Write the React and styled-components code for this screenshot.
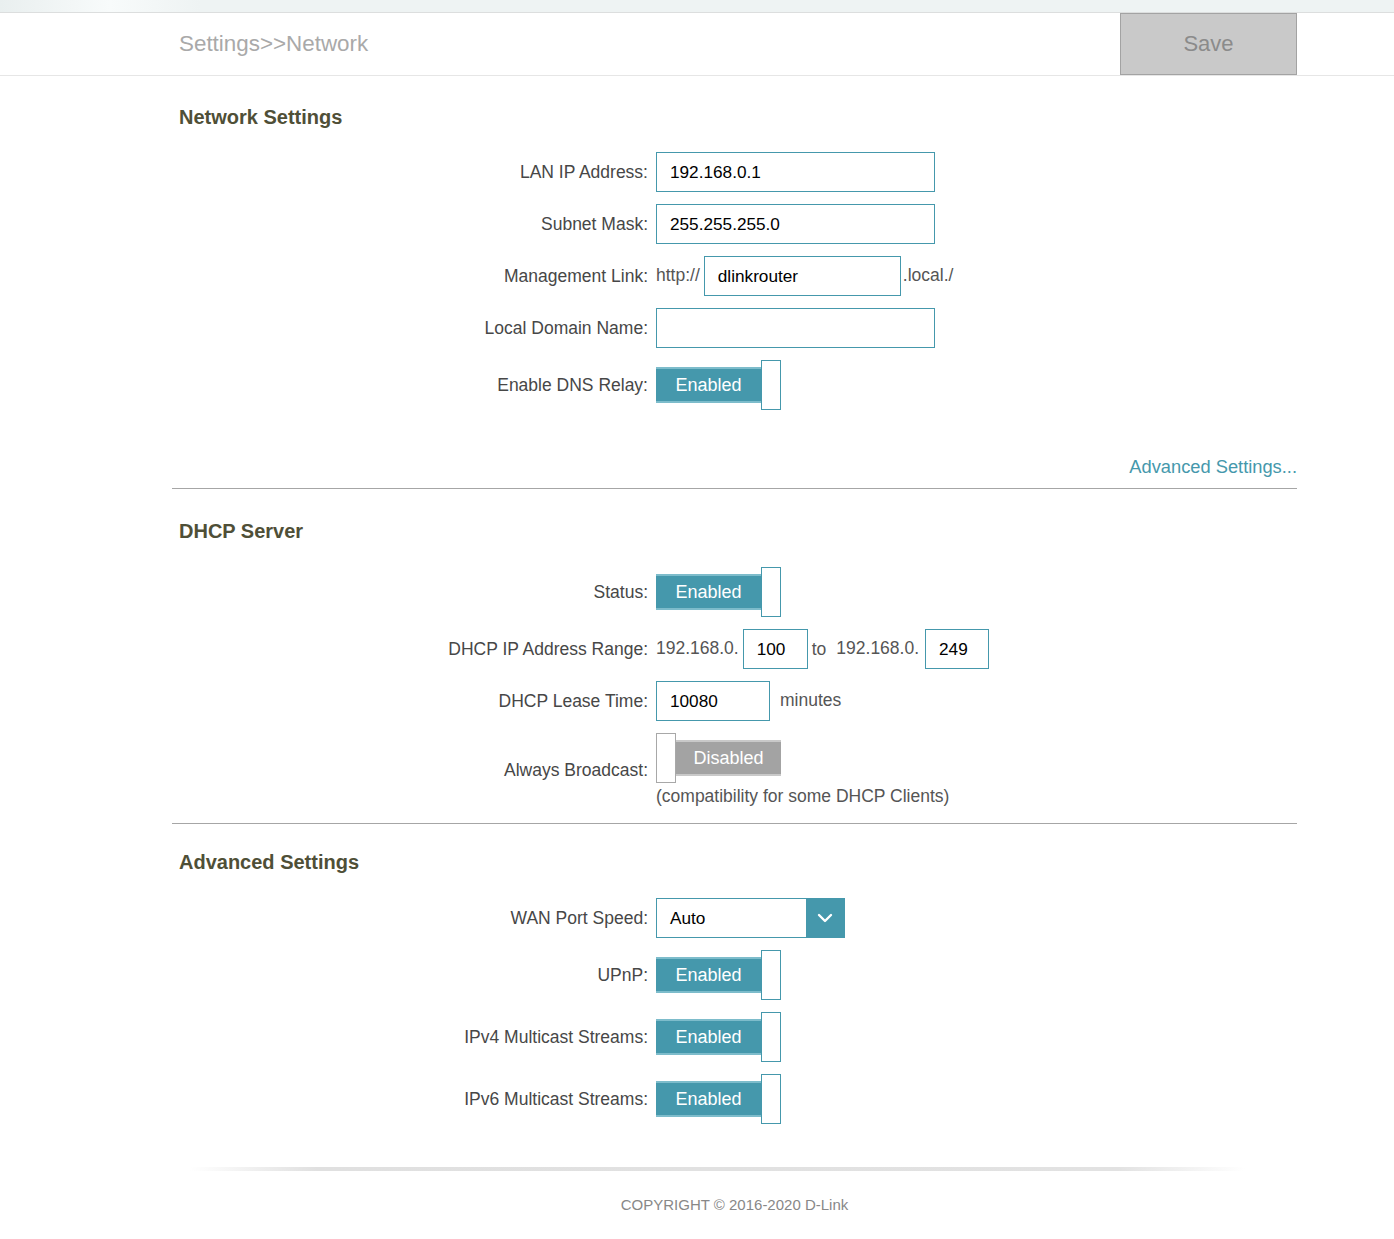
import React from "react";
import styled, { createGlobalStyle } from "styled-components";

const Global = createGlobalStyle`
  html, body { margin: 0; padding: 0; background: #fff; }
  body { font-family: "Liberation Sans", Arial, sans-serif; }
  * { box-sizing: border-box; }
`;

const TEAL = "#4598ac";

const TopBand = styled.div`
  height: 13px;
  background: linear-gradient(to right, #e9efef 0px, #f8fbfb 110px, #eef3f3 200px, #eef3f3 100%);
  border-bottom: 1px solid #dcdede;
`;

const Header = styled.header`
  height: 63px;
  border-bottom: 1px solid #e6e6e6;
`;

const HeaderInner = styled.div`
  width: 1125px;
  margin-left: 172px;
  height: 100%;
  display: flex;
  align-items: flex-end;
  justify-content: space-between;
`;

const Crumb = styled.div`
  align-self: center;
  padding-left: 7px;
  font-size: 22.4px;
  color: #a9a9a9;
  margin-top: -1px;
`;

const SaveButton = styled.button`
  width: 177px;
  height: 62px;
  background: #c9c9c9;
  border: 1px solid #a3a3a3;
  color: #8b8b8b;
  font-family: inherit;
  font-size: 22px;
  padding: 0;
  cursor: default;
`;

const Main = styled.main`
  width: 1125px;
  margin-left: 172px;
`;

const Section = styled.section`
  padding-top: ${(p) => p.$top}px;
`;

const Heading = styled.h2`
  margin: 0 0 ${(p) => p.$after || 23}px 7px;
  font-size: 20px;
  line-height: 24px;
  font-weight: bold;
  color: #4f4f37;
`;

const Rows = styled.div`
  display: grid;
  row-gap: 12px;
`;

const Row = styled.div`
  display: grid;
  grid-template-columns: 476px 1fr;
  column-gap: 8px;
  align-items: center;
`;

const Label = styled.label`
  text-align: right;
  font-size: 17.5px;
  line-height: 20px;
  color: #474747;
  align-self: ${(p) => (p.$top ? "start" : "center")};
  padding-top: ${(p) => p.$top || 0}px;
`;

const Control = styled.div`
  display: flex;
  align-items: center;
  font-size: 17.5px;
  color: #555;
`;

const Stack = styled.div`
  display: flex;
  flex-direction: column;
  align-items: flex-start;
`;

const Input = styled.input`
  width: ${(p) => p.$w || 279}px;
  height: 40px;
  border: 1px solid ${TEAL};
  padding: 0 0 0 13px;
  font-family: inherit;
  font-size: 17.2px;
  color: #000;
  background: #fff;
  outline: none;
  margin: ${(p) => p.$m || "0"};
`;

const Text = styled.span`
  font-size: 17.5px;
  line-height: 20px;
  color: #555;
  margin: ${(p) => p.$m || "0"};
  white-space: nowrap;
`;

const Note = styled.div`
  font-size: 17.5px;
  line-height: 20px;
  color: #555;
  margin-top: 3px;
`;

const SwitchBox = styled.div`
  display: flex;
  align-items: center;
  height: 50px;
  flex-direction: ${(p) => (p.$on ? "row" : "row-reverse")};
  justify-content: flex-end;
  width: 125px;
`;

const Track = styled.div`
  width: ${(p) => (p.$on ? 106 : 105)}px;
  height: 36px;
  background: ${(p) => (p.$on ? TEAL : "#a3a3a3")};
  border-top: 2px solid ${(p) => (p.$on ? "#7dbccb" : "#c9c9c9")};
  border-bottom: 2px solid ${(p) => (p.$on ? "#7dbccb" : "#c9c9c9")};
  color: #fff;
  font-size: 18px;
  display: flex;
  align-items: center;
  justify-content: center;
`;

const Knob = styled.div`
  width: 20px;
  height: 50px;
  background: #fff;
  border: 1px solid ${(p) => (p.$on ? TEAL : "#a8a8a8")};
`;

const Switch = ({ on }) => (
  <SwitchBox $on={on}>
    {on ? (
      <>
        <Track $on>Enabled</Track>
        <Knob $on />
      </>
    ) : (
      <>
        <Track>Disabled</Track>
        <Knob />
      </>
    )}
  </SwitchBox>
);

const SelectBox = styled.div`
  width: 189px;
  height: 40px;
  border: 1px solid ${TEAL};
  display: flex;
  align-items: stretch;
  background: #fff;
`;

const SelectValue = styled.div`
  flex: 1;
  display: flex;
  align-items: center;
  padding-left: 13px;
  font-size: 17.2px;
  color: #000;
`;

const SelectArrow = styled.div`
  width: 38px;
  background: ${TEAL};
  display: flex;
  align-items: center;
  justify-content: center;
`;

const LinkRow = styled.div`
  text-align: right;
  margin-top: 47px;
  padding-bottom: 11px;
  border-bottom: 1px solid #a6a6a6;
`;

const Link = styled.a`
  font-size: 18.3px;
  line-height: 20px;
  color: ${TEAL};
  text-decoration: none;
`;

const Divider = styled.hr`
  border: 0;
  border-top: 1px solid #a6a6a6;
  margin: ${(p) => p.$top}px 0 0 0;
`;

const Footer = styled.footer`
  padding-top: 43px;
  padding-bottom: 26px;
`;

const FooterLine = styled.div`
  height: 4px;
  margin: 0 52px 0 18px;
  background: linear-gradient(to right, rgba(224,224,224,0), #e0e0e0 12%, #e2e2e2 88%, rgba(224,224,224,0));
`;

const Copyright = styled.div`
  text-align: center;
  margin-top: 25px;
  font-size: 15px;
  line-height: 18px;
  color: #888;
`;

export default function App() {
  return (
    <>
      <Global />
      <TopBand />
      <Header>
        <HeaderInner>
          <Crumb>Settings&gt;&gt;Network</Crumb>
          <SaveButton>Save</SaveButton>
        </HeaderInner>
      </Header>
      <Main>
        <Section $top={29}>
          <Heading $after={23}>Network Settings</Heading>
          <Rows>
            <Row>
              <Label>LAN IP Address:</Label>
              <Control><Input defaultValue="192.168.0.1" /></Control>
            </Row>
            <Row>
              <Label>Subnet Mask:</Label>
              <Control><Input defaultValue="255.255.255.0" /></Control>
            </Row>
            <Row>
              <Label>Management Link:</Label>
              <Control>
                <Text $m="-2px 4px 0 0">http://</Text>
                <Input $w={197} defaultValue="dlinkrouter" />
                <Text $m="-2px 0 0 2px">.local./</Text>
              </Control>
            </Row>
            <Row>
              <Label>Local Domain Name:</Label>
              <Control><Input defaultValue="" /></Control>
            </Row>
            <Row>
              <Label>Enable DNS Relay:</Label>
              <Control><Switch on /></Control>
            </Row>
          </Rows>
          <LinkRow>
            <Link href="#">Advanced Settings...</Link>
          </LinkRow>
        </Section>

        <Section $top={30}>
          <Heading $after={24}>DHCP Server</Heading>
          <Rows>
            <Row>
              <Label>Status:</Label>
              <Control><Switch on /></Control>
            </Row>
            <Row>
              <Label>DHCP IP Address Range:</Label>
              <Control>
                <Text $m="-2px 4px 0 0">192.168.0.</Text>
                <Input $w={65} defaultValue="100" />
                <Text $m="0 10px 0 4px">to</Text>
                <Text $m="-2px 6px 0 0">192.168.0.</Text>
                <Input $w={64} defaultValue="249" />
              </Control>
            </Row>
            <Row>
              <Label>DHCP Lease Time:</Label>
              <Control>
                <Input $w={114} defaultValue="10080" />
                <Text $m="-2px 0 0 10px">minutes</Text>
              </Control>
            </Row>
            <Row>
              <Label $top={27}>Always Broadcast:</Label>
              <Stack>
                <Switch on={false} />
                <Note>(compatibility for some DHCP Clients)</Note>
              </Stack>
            </Row>
          </Rows>
          <Divider $top={17} />
        </Section>

        <Section $top={26}>
          <Heading $after={24}>Advanced Settings</Heading>
          <Rows>
            <Row>
              <Label>WAN Port Speed:</Label>
              <Control>
                <SelectBox>
                  <SelectValue>Auto</SelectValue>
                  <SelectArrow>
                    <svg width="16" height="10" viewBox="0 0 16 10">
                      <path d="M2 2 L8 8 L14 2" fill="none" stroke="#fff" strokeWidth="2.4" strokeLinecap="round" strokeLinejoin="round" />
                    </svg>
                  </SelectArrow>
                </SelectBox>
              </Control>
            </Row>
            <Row>
              <Label>UPnP:</Label>
              <Control><Switch on /></Control>
            </Row>
            <Row>
              <Label>IPv4 Multicast Streams:</Label>
              <Control><Switch on /></Control>
            </Row>
            <Row>
              <Label>IPv6 Multicast Streams:</Label>
              <Control><Switch on /></Control>
            </Row>
          </Rows>
        </Section>

        <Footer>
          <FooterLine />
          <Copyright>COPYRIGHT © 2016-2020 D-Link</Copyright>
        </Footer>
      </Main>
    </>
  );
}
